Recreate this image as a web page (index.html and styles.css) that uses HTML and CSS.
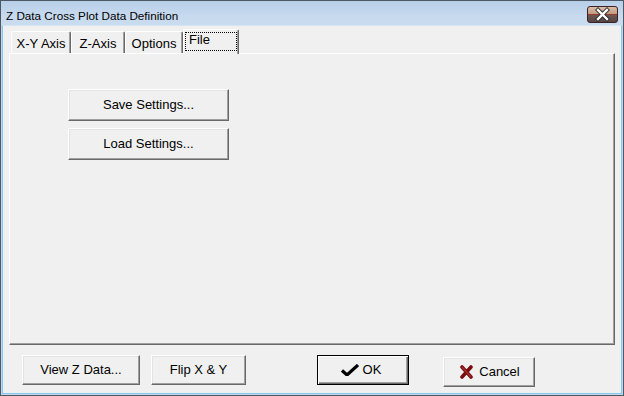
FILE: index.html
```html
<!DOCTYPE html>
<html>
<head>
<meta charset="utf-8">
<link rel="stylesheet" href="styles.css">
</head>
<body>
<div class="window">
  <div class="titlebar">
    <span class="title">Z Data Cross Plot Data Definition</span>
    <span class="close">
      <svg width="31" height="17" viewBox="0 0 31 17">
        <defs>
          <linearGradient id="cg" x1="0" y1="0" x2="0" y2="1">
            <stop offset="0" stop-color="#dcc0ac"/>
            <stop offset="0.45" stop-color="#c49a82"/>
            <stop offset="0.5" stop-color="#9a3a2a"/>
            <stop offset="0.56" stop-color="#6a5654"/>
            <stop offset="1" stop-color="#564444"/>
          </linearGradient>
        </defs>
        <rect x="0.5" y="0.5" width="30" height="16" rx="2.5" fill="url(#cg)" stroke="#3a2222"/>
        <path d="M11 4 L20 13 M20 4 L11 13" stroke="#2a2a2a" stroke-width="4.2" stroke-linecap="square"/>
        <path d="M11 4 L20 13 M20 4 L11 13" stroke="#ffffff" stroke-width="2.4" stroke-linecap="square"/>
      </svg>
    </span>
  </div>
  <div class="client">
    <div class="tabs">
      <div class="tab t1">X-Y Axis</div>
      <div class="tab t2">Z-Axis</div>
      <div class="tab t3">Options</div>
      <div class="tab t4 active"><span class="focus">File</span></div>
    </div>
    <div class="panel">
      <div class="btn wide">Save Settings...</div>
      <div class="btn wide">Load Settings...</div>
    </div>
    <div class="footer">
      <div class="btn b-view">View Z Data...</div>
      <div class="btn b-flip">Flip X &amp; Y</div>
      <div class="btn b-ok default">
        <svg class="ico" width="18" height="12" viewBox="0 0 18 12">
          <path d="M1 6.5 L6 11 L17 1" fill="none" stroke="#000" stroke-width="3.2" stroke-linejoin="miter"/>
        </svg>
        <span>OK</span>
      </div>
      <div class="btn b-cancel">
        <svg class="ico" width="13" height="14" viewBox="0 0 13 14">
          <path d="M2 2 L11 12 M11 2 L2 12" stroke="#7a0e0e" stroke-width="3.6" stroke-linecap="round"/>
          <path d="M2.5 2.5 L10.5 11.5" stroke="#a83030" stroke-width="1.2" stroke-linecap="round"/>
        </svg>
        <span>Cancel</span>
      </div>
    </div>
  </div>
</div>
</body>
</html>
```
FILE: styles.css
```css
html, body {
  margin: 0;
  padding: 0;
  background: #f0f0f0;
}
body {
  font-family: "Liberation Sans", Arial, sans-serif;
  font-size: 13px;
  color: #000;
}
.window {
  width: 624px;
  height: 396px;
  box-sizing: border-box;
  border: 1px solid #4d5866;
  background: #c3d6eb;
  display: flex;
  flex-direction: column;
  padding: 0 1px 1px 1px;
}
.titlebar {
  height: 24px;
  flex: 0 0 24px;
  display: flex;
  align-items: center;
  justify-content: space-between;
  background: linear-gradient(#b8cfe9, #c6d9ee 60%, #cadcef);
  margin: 0 -1px;
  padding: 0 5px 0 5px;
}
.title {
  font-size: 11.7px;
  padding-top: 4px;
}
.close {
  display: block;
  height: 17px;
  width: 31px;
  margin-top: 3px;
}
.close svg { display: block; }
.client {
  flex: 1;
  background: #f0f0f0;
  border: 1px solid #86c9ee;
  border-top-color: #d8e4f0;
  padding: 3px 4px 0 6px;
  display: flex;
  flex-direction: column;
}
.tabs {
  display: flex;
  align-items: flex-end;
  height: 24px;
  padding-left: 2px;
}
.tab {
  box-sizing: border-box;
  height: 22px;
  border-top: 1px solid #fff;
  border-left: 1px solid #fff;
  border-right: 1px solid #696969;
  box-shadow: inset -1px 0 #a0a0a0;
  border-radius: 2px 2px 0 0;
  text-align: center;
  line-height: 18px;
  padding-top: 3px;
}
.t1 { width: 60px; }
.t2 { width: 54px; }
.t3 { width: 58px; }
.t4 { width: 56px; }
.tab.active {
  height: 25px;
  margin-bottom: -1px;
  position: relative;
  z-index: 1;
  background: #f0f0f0;
  padding: 2px 1px 2px 1px;
  text-align: left;
}
.focus {
  display: block;
  height: 19px;
  outline: 1px dotted #000;
  outline-offset: -1px;
  padding-left: 4px;
  line-height: 16px;
}
.panel {
  box-sizing: border-box;
  width: 606px;
  height: 292px;
  border-top: 1px solid #fff;
  border-left: 1px solid #fff;
  border-right: 1px solid #696969;
  border-bottom: 1px solid #696969;
  box-shadow: inset -1px -1px #a0a0a0;
  padding: 35px 0 0 58px;
  display: flex;
  flex-direction: column;
  gap: 7px;
}
.btn {
  box-sizing: border-box;
  height: 32px;
  border: 1px solid;
  border-color: #fff #696969 #696969 #fff;
  box-shadow: inset -1px -1px #a0a0a0, inset 1px 1px #e3e3e3;
  background: #f0f0f0;
  display: flex;
  align-items: center;
  justify-content: center;
  padding-bottom: 1px;
}
.wide { width: 161px; }
.footer {
  display: flex;
  align-items: flex-start;
  margin-top: 10px;
  padding-left: 13px;
}
.footer .btn { height: 30px; }
.b-view { width: 118px; }
.b-flip { width: 95px; margin-left: 11px; }
.b-ok { width: 92px; margin-left: 71px; }
.b-cancel { width: 92px; margin-left: 34px; margin-top: 2px; }
.default {
  border: 1px solid #000;
  box-shadow: inset 1px 1px #fff, inset -1px -1px #696969, inset -2px -2px #a0a0a0;
}
.ico { display: block; }
.b-ok .ico { margin-right: 4px; margin-left: -4px; }
.b-cancel .ico { margin-right: 6px; margin-left: 2px; }
```
